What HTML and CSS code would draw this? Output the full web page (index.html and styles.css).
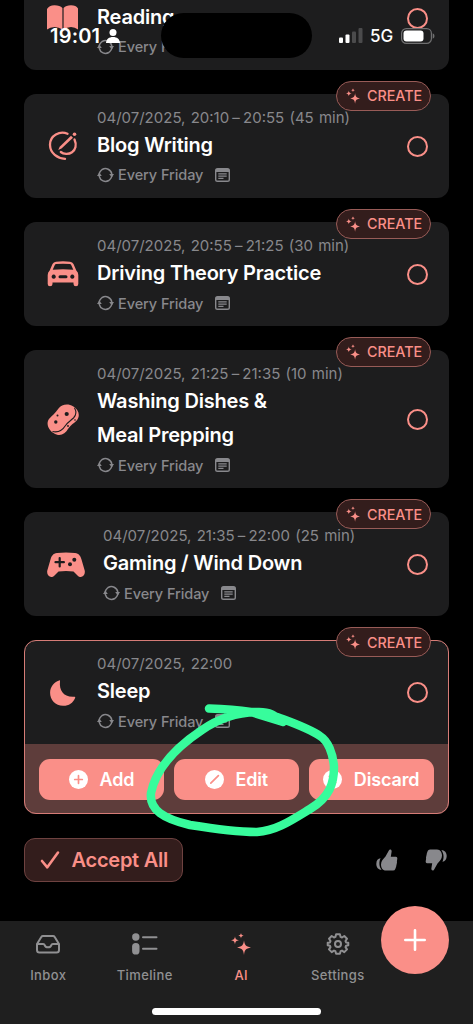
FILE: index.html
```html
<!DOCTYPE html>
<html lang="en">
<head>
<meta charset="utf-8">
<meta name="viewport" content="width=device-width, initial-scale=1">
<title>Schedule suggestions</title>
<link rel="stylesheet" href="styles.css">
</head>
<body>
<svg class="defs" aria-hidden="true">
  <symbol id="sparkles" viewBox="0 0 20 22">
    <path d="M13 7.2C13.7 12 14.4 13.2 20 14.5C14.4 15.6 13.7 16.8 13 22C12.3 16.8 11.6 15.6 6 14.5C11.6 13.2 12.3 12 13 7.2Z"/>
    <path d="M4 3.2C4.4 5.9 5 6.7 8 7.3C5 7.9 4.4 8.7 4 11.4C3.6 8.7 3 7.9 0 7.3C3 6.7 3.6 5.9 4 3.2Z"/>
    <path d="M10 0C10.3 1.7 10.8 2.3 12.7 2.7C10.8 3.1 10.3 3.7 10 5.4C9.7 3.7 9.2 3.1 7.3 2.7C9.2 2.3 9.7 1.7 10 0Z"/>
  </symbol>
  <symbol id="repeat" viewBox="0 0 17 16">
    <path fill="none" stroke="currentColor" stroke-width="1.5" stroke-linecap="round" d="M2.2 7.2A6.4 6.4 0 0 1 4.3 3.2M5.2 2.5A6.4 6.4 0 0 1 14.8 7M14.8 8.8A6.4 6.4 0 0 1 12.7 12.8M11.8 13.5A6.4 6.4 0 0 1 2.3 9.5"/>
    <path d="M0 9L2.3 5.4L4.8 9ZM12.2 7H17L14.8 10.6Z"/>
  </symbol>
  <symbol id="note" viewBox="0 0 15 14">
    <path fill-rule="evenodd" d="M2.5 0h10A2.5 2.5 0 0 1 15 2.5v9a2.5 2.5 0 0 1-2.5 2.5h-10A2.5 2.5 0 0 1 0 11.5v-9A2.5 2.5 0 0 1 2.5 0ZM1.4 4v7.4q0 1.2 1.2 1.2h9.8q1.2 0 1.2-1.2V4Z"/>
    <path d="M3.3 5.2h8.4v1.3h-8.4zM3.3 7.5h8.4v1.3h-8.4zM3.3 9.8h5.200v1.3h-5.200z"/>
  </symbol>
</svg>

<div class="screen">
  <main class="feed">
    <article class="card">
      <div class="row">
        <svg class="glyph" viewBox="0 0 32 32"><path d="M0 7Q2 3.200 7.500 3.200Q13 3.200 15.400 6V27.500Q12 25 7.500 25Q3 25 0 27.500ZM16.600 6Q19 3.200 24 3.200Q29 3.200 31 6.500V27.500Q28 25 24 25Q20 25 16.600 27.500Z"/></svg>
        <div class="info">
          <div class="when"></div>
          <h2 class="title">Reading</h2>
          <div class="meta"><svg class="repeat"><use href="#repeat"/></svg><span>Every Friday</span><svg class="note"><use href="#note"/></svg></div>
        </div>
        <span class="check"></span>
      </div>
    </article>

    <article class="card">
      <span class="badge"><svg class="spark"><use href="#sparkles"/></svg>CREATE</span>
      <div class="row">
        <svg class="glyph" viewBox="0 0 32 32"><g fill="none" stroke="currentColor" stroke-width="2.300" stroke-linecap="round"><path d="M20.500 3.800C13 .3 2.800 5.500 3 15C3.200 23.500 10.500 28.200 18 28.800"/><path d="M27.500 9.500C30 15 28.500 20 25 22.300C21.500 24.800 16.500 24.300 13.800 22"/></g><path d="M24 5.800L26 7.800L14.500 18.600L11.200 20L12.700 16.700Z"/><circle cx="27.500" cy="4.300" r="1.800"/></svg>
        <div class="info">
          <div class="when">04/07/2025, 20:10<span class="dash">–</span>20:55 (45 min)</div>
          <h2 class="title">Blog Writing</h2>
          <div class="meta"><svg class="repeat"><use href="#repeat"/></svg><span>Every Friday</span><svg class="note"><use href="#note"/></svg></div>
        </div>
        <span class="check"></span>
      </div>
    </article>

    <article class="card">
      <span class="badge"><svg class="spark"><use href="#sparkles"/></svg>CREATE</span>
      <div class="row">
        <svg class="glyph" viewBox="0 0 32 32"><path fill-rule="evenodd" d="M9 3.700Q16 3 23 3.700Q25.500 4 26.500 6L29.300 12.500Q31.300 14.200 31.300 17V26Q31.300 28.300 29 28.300Q26.500 28.300 26.500 26V24.500H5.500V26Q5.500 28.300 3 28.300Q.7 28.300 .7 26V17Q.7 14.200 2.700 12.500L5.500 6Q6.500 4 9 3.700ZM9.200 6Q8.200 6.100 7.700 7.200L5.700 11.800Q16 10.900 26.300 11.800L24.300 7.200Q23.800 6.100 22.800 6Q16 5.300 9.200 6ZM6.700 16.600a2.100 2.100 0 1 0 .01 0ZM25.300 16.600a2.100 2.100 0 1 0 .01 0ZM13 17.200a1.500 1.500 0 0 0 0 3h6a1.500 1.500 0 0 0 0-3Z"/></svg>
        <div class="info">
          <div class="when">04/07/2025, 20:55<span class="dash">–</span>21:25 (30 min)</div>
          <h2 class="title">Driving Theory Practice</h2>
          <div class="meta"><svg class="repeat"><use href="#repeat"/></svg><span>Every Friday</span><svg class="note"><use href="#note"/></svg></div>
        </div>
        <span class="check"></span>
      </div>
    </article>

    <article class="card">
      <span class="badge"><svg class="spark"><use href="#sparkles"/></svg>CREATE</span>
      <div class="row">
        <svg class="glyph" viewBox="0 0 32 32"><path d="M11.500 4.500C14.500 .3 21 -1 26 2.200C32 5.500 33.500 12 29.700 16.500C27 19.500 24 20.500 21.500 24.300C17.500 31 12.500 33 6.500 29C1.500 26 -1.300 19.500 2 15C5 11.500 8.500 9 11.500 4.500Z"/><path class="crease" d="M27.500 3.800C29.500 7.500 29.500 11 26.500 14C23.500 16.800 21 18 18.500 21.500C15 27 11.500 29 5.500 27.500"/><g class="hole"><circle cx="19.700" cy="10" r="2.100"/><circle cx="8.800" cy="18" r="1.700"/><circle cx="10.500" cy="11.500" r="1"/><circle cx="28" cy="16" r=".8"/><circle cx="21" cy="22" r=".9"/></g></svg>
        <div class="info">
          <div class="when">04/07/2025, 21:25<span class="dash">–</span>21:35 (10 min)</div>
          <h2 class="title">Washing Dishes &amp;<br>Meal Prepping</h2>
          <div class="meta"><svg class="repeat"><use href="#repeat"/></svg><span>Every Friday</span><svg class="note"><use href="#note"/></svg></div>
        </div>
        <span class="check"></span>
      </div>
    </article>

    <article class="card">
      <span class="badge"><svg class="spark"><use href="#sparkles"/></svg>CREATE</span>
      <div class="row">
        <svg class="glyph glyph-wide" viewBox="0 0 38 32"><path d="M10 4Q19 3 28 4C32 4.500 33.500 7 34.500 10.500L37.700 21.500C38.800 27 34 30 30.500 26.500L26.500 22.500Q19 21.700 11.500 22.500L7.500 26.500C4 30 -.8 27 .3 21.500L3.500 10.500C4.500 7 6 4.500 10 4Z"/><path class="cut" d="M12.700 9V17.400M8.500 13.200H16.900"/><g class="hole"><circle cx="27.300" cy="10.800" r="2"/><circle cx="23" cy="15.200" r="2"/></g></svg>
        <div class="info">
          <div class="when">04/07/2025, 21:35<span class="dash">–</span>22:00 (25 min)</div>
          <h2 class="title">Gaming / Wind Down</h2>
          <div class="meta"><svg class="repeat"><use href="#repeat"/></svg><span>Every Friday</span><svg class="note"><use href="#note"/></svg></div>
        </div>
        <span class="check"></span>
      </div>
    </article>

    <article class="card card-selected">
      <span class="badge"><svg class="spark"><use href="#sparkles"/></svg>CREATE</span>
      <div class="row">
        <svg class="glyph" viewBox="0 0 32 32"><path d="M12.100 3.400Q13.300 2.900 13 4.200C12 13.500 16.500 20.300 27 19.700Q28.800 19.400 28.100 20.900C26 26 21.500 29 16 28.800C8.500 28.600 3 23 3.100 15.800C3.200 9.500 7 5 12.100 3.400Z"/></svg>
        <div class="info">
          <div class="when">04/07/2025, 22:00</div>
          <h2 class="title">Sleep</h2>
          <div class="meta"><svg class="repeat"><use href="#repeat"/></svg><span>Every Friday</span><svg class="note"><use href="#note"/></svg></div>
        </div>
        <span class="check"></span>
      </div>
      <div class="actions">
        <button class="action"><svg viewBox="0 0 18 18"><circle cx="9" cy="9" r="9"/><path d="M9 5.400V12.600M5.400 9H12.600"/></svg><span>Add</span></button>
        <button class="action"><svg viewBox="0 0 18 18"><circle cx="9" cy="9" r="9"/><path d="M5.500 12.500L12.700 5.300"/></svg><span>Edit</span></button>
        <button class="action"><svg viewBox="0 0 18 18"><circle cx="9" cy="9" r="9"/><path d="M6 6L12 12M12 6L6 12"/></svg><span>Discard</span></button>
      </div>
    </article>
  </main>

  <div class="review">
    <button class="accept"><svg viewBox="0 0 20 20"><path d="M2 11L7.300 17.300L18 2.500"/></svg><span>Accept All</span></button>
    <div class="votes">
      <svg viewBox="0 0 22 22"><path d="M12.700 1.800C13.500-.2 16 .3 15.600 2.800L14.800 7.800H20Q21.500 8 21.300 9.600L20.900 12.800L21 13.500L20.300 16.700L20.200 17.500L19.300 20Q18.800 21.500 17 21.600H10C6.500 21.500 5 18.500 5 15.500C5 12 7.500 9.700 9.500 7.500Z"/><path d="M4.600 9.300C2.800 12.500 3 18 5.600 20.600C2.800 21 .3 18.500 .3 14.900C.3 11.500 2 9.400 4.600 9.300Z"/></svg>
      <svg class="down" viewBox="0 0 22 22"><path d="M12.700 1.800C13.500-.2 16 .3 15.600 2.800L14.800 7.800H20Q21.500 8 21.300 9.600L20.900 12.800L21 13.500L20.300 16.700L20.200 17.500L19.300 20Q18.800 21.500 17 21.600H10C6.500 21.500 5 18.500 5 15.500C5 12 7.500 9.700 9.500 7.500Z"/><path d="M4.600 9.300C2.800 12.500 3 18 5.600 20.600C2.800 21 .3 18.500 .3 14.900C.3 11.500 2 9.400 4.600 9.300Z"/></svg>
    </div>
  </div>

  <nav class="tabs">
    <a class="tab"><svg viewBox="0 0 26 24"><path class="line" d="M2 12L6.300 5Q6.900 4 8 4H18Q19.100 4 19.700 5L24 12V18Q24 20.500 21.500 20.500H4.500Q2 20.500 2 18ZM2 12H8.200Q9.300 12 9.700 13.100Q10.400 15.300 13 15.300Q15.600 15.300 16.300 13.100Q16.700 12 17.800 12H24"/></svg><span>Inbox</span></a>
    <a class="tab"><svg viewBox="0 0 26 24"><circle cx="3.800" cy="5" r="3.700"/><rect x=".1" y="11" width="7.400" height="11.500" rx="3.600"/><path class="line" d="M11 5.200H24.500M11 16.700H24.500"/></svg><span>Timeline</span></a>
    <a class="tab tab-active"><svg viewBox="0 0 26 24"><use href="#sparkles" x="3" y="1" width="20" height="22"/></svg><span>AI</span></a>
    <a class="tab"><svg viewBox="0 0 26 24"><circle class="line" cx="13" cy="12" r="3"/><path class="line" stroke-linejoin="round" d="M11.100 2.200H14.900L15.600 4.900L17 5.500L19.300 4L22 6.700L20.500 9L21.100 10.400L23.300 10.800V13.200L21.100 13.700L20.500 15.100L22 17.400L19.300 20.100L17 18.600L15.600 19.200L14.900 21.800H11.100L10.400 19.200L9 18.600L6.700 20.100L4 17.400L5.500 15.100L4.900 13.700L2.700 13.200V10.800L4.900 10.400L5.500 9L4 6.700L6.700 4L9 5.500L10.400 4.900Z"/></svg><span>Settings</span></a>
    <button class="fab" aria-label="New"><svg viewBox="0 0 22 22"><path d="M11 1.300V20.700M1.300 11H20.700"/></svg></button>
    <i class="home"></i>
  </nav>

  <header class="status">
    <span class="clock">19:01</span>
    <svg class="person" viewBox="0 0 14 14"><circle cx="7" cy="3.500" r="3.500"/><path d="M0 14C.3 10 3 8 7 8S13.700 10 14 14Z"/></svg>
    <span class="island"></span>
    <svg class="signal" viewBox="0 0 24 15"><rect x="0" y="9.500" width="4" height="5.500" rx="1"/><rect x="6.500" y="6.500" width="4" height="8.500" rx="1"/><g class="dim"><rect x="13" y="3.500" width="4" height="11.500" rx="1"/><rect x="19.500" y="0" width="4" height="15" rx="1"/></g></svg>
    <span class="network">5G</span>
    <svg class="battery" viewBox="0 0 34 16"><rect class="shell" x=".6" y=".6" width="29.800" height="14.800" rx="4.700"/><rect x="2.500" y="2.500" width="20" height="11" rx="3"/><path class="tip" d="M31.700 5.300Q33.500 6 33.500 8T31.700 10.700Z"/></svg>
  </header>

  <svg class="scribble" viewBox="0 0 200 145"><path d="M69 13.500C82 14 97 15 111 17L143 27C134 20 130 17 119 17C98 17 78 24 62 35C38 51 16 73 11 98C9 115 24 124 50 130C75 134 96 137 117 137C136 136 152 125 170 114C190 102 194 88 194 72C193 58 188 46 180 41C168 33 153 28 137 22C124 16 107 16 91 18"/></svg>
</div>
</body>
</html>
```
FILE: styles.css
```css
* { box-sizing: border-box; }

body {
  margin: 0;
  background: #000;
  color: #fff;
  font-family: Inter, "Liberation Sans", sans-serif;
}

button {
  border: 0;
  padding: 0;
  font: inherit;
  color: inherit;
}

svg { fill: currentColor; flex: none; display: block; }
.defs { position: absolute; width: 0; height: 0; }

.screen {
  position: relative;
  width: 473px;
  height: 1024px;
  overflow: hidden;
  display: flex;
  flex-direction: column;
}

/* Scrolled list of suggestions */
.feed {
  display: flex;
  flex-direction: column;
  gap: 24.2px;
  padding: 0 24px;
  margin-top: -34.3px;
}

.card {
  position: relative;
  background: #1d1d1e;
  border-radius: 12px;
}

.row {
  display: flex;
  align-items: center;
  padding: 14.2px 21px 12px 23px;
}

.glyph { width: 32px; height: 32px; margin-top: -1px; color: #fa8f88; }
.glyph-wide { width: 38px; }
.hole { fill: #1d1d1e; }
.crease { fill: none; stroke: #1d1d1e; stroke-width: 1.1; }
.cut { stroke: #1d1d1e; stroke-width: 2.2; stroke-linecap: round; }

.info { flex: 1; margin-left: 18px; white-space: nowrap; }
.when {
  height: 20px;
  font-size: 15px;
  line-height: 20px;
  word-spacing: 1px;
  color: #88888c;
}
.dash { margin: 0 3.2px; }
.title {
  margin: 0;
  font-size: 20px;
  font-weight: 600;
  line-height: 34.2px;
  letter-spacing: -.2px;
}
.meta {
  display: flex;
  align-items: center;
  height: 23.5px;
  padding-top: 2px;
  font-size: 14.5px;
  font-weight: 500;
  letter-spacing: -.08px;
  color: #88888c;
}
.repeat { width: 17px; height: 16px; margin-right: 4px; }
.note { width: 15px; height: 14px; margin-left: 12px; }

.check {
  width: 21px;
  height: 21px;
  margin-top: -1px;
  border: 2.4px solid #fa8f88;
  border-radius: 50%;
}

.badge {
  position: absolute;
  top: -13px;
  right: 18px;
  width: 95px;
  height: 30px;
  display: flex;
  align-items: center;
  padding-left: 9px;
  border: 1.2px solid #985b57;
  border-radius: 15px;
  background: #331d1c;
  color: #fa8f88;
  font-size: 14.3px;
  font-weight: 500;
}
.spark { width: 14px; height: 16px; margin-right: 7px; }

.card-selected::after {
  content: "";
  position: absolute;
  inset: 0;
  border: 1.5px solid #d67c77;
  border-radius: 12px;
  pointer-events: none;
}
.card-selected .badge { z-index: 1; }
.actions {
  display: flex;
  gap: 9.5px;
  height: 70px;
  padding: 14.5px 15px;
  border-radius: 0 0 12px 12px;
  background: #5e3d3b;
}
.action {
  flex: 1;
  height: 41px;
  display: flex;
  align-items: center;
  justify-content: center;
  gap: 11.5px;
  border-radius: 11px;
  background: #fa8f88;
  font-size: 18px;
  font-weight: 600;
  letter-spacing: -.15px;
}
.action svg { width: 19px; height: 19px; }
.action path { stroke: #fa8f88; stroke-width: 1.6; stroke-linecap: round; }

.review {
  display: flex;
  justify-content: space-between;
  align-items: center;
  margin-top: 23.7px;
  padding: 0 26px 0 24px;
}
.accept {
  width: 159px;
  height: 44px;
  display: flex;
  align-items: center;
  gap: 11.5px;
  padding-left: 15px;
  border: 1px solid #6e4240;
  border-radius: 11px;
  background: #331d1c;
  color: #fa8f88;
  font-size: 20px;
  font-weight: 600;
  letter-spacing: -.25px;
}
.accept svg { width: 20px; height: 20px; fill: none; stroke: currentColor; stroke-width: 2.6; stroke-linecap: round; stroke-linejoin: round; }
.votes { display: flex; gap: 27px; color: #88888c; }
.votes svg { width: 22px; height: 22px; }
.votes .down { transform: rotate(180deg); }

/* Bottom navigation */
.tabs {
  position: relative;
  margin-top: auto;
  height: 103px;
  display: flex;
  padding: 11px 87px 0 0;
  background: #1f1f1f;
  color: #909092;
}
.tab {
  flex: 1;
  display: flex;
  flex-direction: column;
  align-items: center;
  gap: 10px;
  font-size: 13px;
  font-weight: 500;
  line-height: 18px;
  letter-spacing: .38px;
}
.tab-active { color: #fa8f88; }
.tab svg { width: 26px; height: 24px; }
.line { fill: none; stroke: currentColor; stroke-width: 2; stroke-linecap: round; }

.fab {
  position: absolute;
  right: 24px;
  top: -15px;
  width: 68px;
  height: 68px;
  display: grid;
  place-items: center;
  border-radius: 50%;
  background: #fa8f88;
}
.fab svg { width: 22px; height: 22px; stroke: #fff; stroke-width: 2.6; stroke-linecap: round; }
.home {
  position: absolute;
  bottom: 9.5px;
  left: 152px;
  width: 169px;
  height: 6.5px;
  border-radius: 4px;
  background: #fff;
}

/* System status bar floats over the list */
.status {
  position: absolute;
  inset: 13px 0 auto 0;
  height: 45px;
  display: flex;
  align-items: center;
  padding-left: 50px;
}
.clock { width: 50px; font-size: 20px; font-weight: 600; letter-spacing: .2px; }
.person { width: 14px; height: 14px; margin-left: 6px; }
.island { width: 151px; height: 45px; margin-left: 41px; border-radius: 23px; background: #000; }
.signal { width: 24px; height: 15px; margin-left: 27px; }
.dim { fill: #4b4b4c; }
.network { width: 24px; margin-left: 7px; font-size: 17px; font-weight: 500; }
.battery { width: 34px; height: 16px; margin-left: 7px; }
.shell { fill: none; stroke: #6f6f70; stroke-width: 1.2; }
.tip { fill: #6f6f70; }

/* Hand-drawn highlight around the Edit button */
.scribble {
  position: absolute;
  left: 140px;
  top: 695px;
  width: 200px;
  height: 145px;
  fill: none;
  stroke: #37fc9c;
  stroke-width: 8.5;
  stroke-linecap: round;
  stroke-linejoin: round;
}
```
